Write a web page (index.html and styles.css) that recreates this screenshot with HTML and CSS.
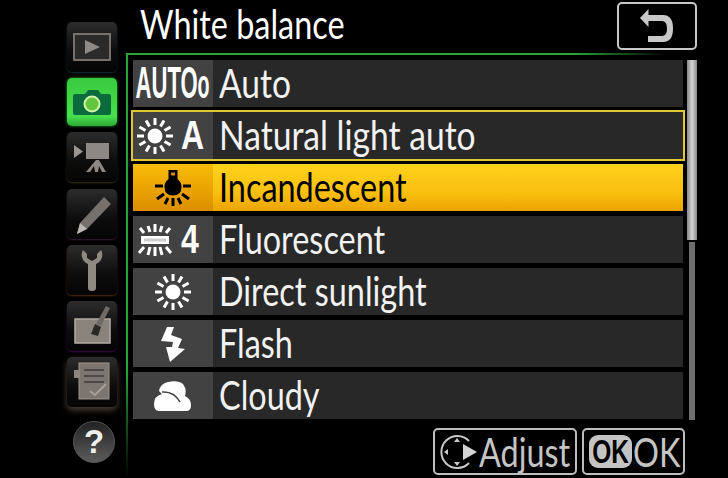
FILE: index.html
```html
<!DOCTYPE html>
<html lang="en">
<head>
    <meta charset="UTF-8">
    <title>White balance</title>
    <link rel="stylesheet" href="styles.css">
</head>
<body>
<div class="screen">

    <!-- Left tabs -->
    <div class="tabs">
        <div class="tab tab-play">
            <svg width="50" height="50" viewBox="0 0 50 50"><rect x="7" y="12" width="36" height="26" fill="#2a2a2a" stroke="#77716c" stroke-width="2"/><path d="M18 18l15 7-15 7z" fill="#8f8a86"/></svg>
        </div>
        <div class="tab tab-photo">
            <svg width="50" height="48" viewBox="0 0 50 48"><path d="M6 18q0-2 2-2h10l3-4h10l3 4h8q2 0 2 2v17q0 2-2 2H8q-2 0-2-2z" fill="#0b6b3c"/><circle cx="25" cy="26" r="8.500" fill="#d2f5a8"/><circle cx="25" cy="26" r="6.500" fill="#5fc63e"/></svg>
        </div>
        <div class="tab tab-movie">
            <svg width="50" height="50" viewBox="0 0 50 50"><path d="M7 13l9 6.500-9 6.500z" fill="#9a9692"/><rect x="19" y="11" width="23" height="16" fill="#8d8884"/><path d="M29 28h3l7 12h-4l-3-6-1 6h-3l-1-6-4 6h-4z" fill="#8d8884"/></svg>
        </div>
        <div class="tab tab-pencil">
            <svg width="50" height="50" viewBox="0 0 50 50"><path d="M37 8l7 7-24 25-10 5 3-11z" fill="#76706a"/><path d="M13 34l7 6-10 5z" fill="#bbb6b0"/></svg>
        </div>
        <div class="tab tab-setup">
            <svg width="50" height="50" viewBox="0 0 50 50"><path d="M16 5q-2 3-1 7 1 5 6 7v24q0 3 4 3t4-3V19q5-2 6-7 1-4-1-7l-4 4v4l-5 3-5-3V9z" fill="#8f8a80"/></svg>
        </div>
        <div class="tab tab-retouch">
            <svg width="50" height="50" viewBox="0 0 50 50"><rect x="8" y="18" width="35" height="24" fill="#8a837c" stroke="#b3aca4" stroke-width="1.500"/><path d="M39 5l4 2-9 18-5-2z" fill="#6f6a66"/><path d="M28 23l6 3-3 9-7-2z" fill="#2a2725"/></svg>
        </div>
        <div class="tab tab-recent">
            <svg width="50" height="50" viewBox="0 0 50 50"><rect x="12" y="6" width="30" height="36" fill="#7d7670" stroke="#9c958e"/><rect x="7" y="13" width="6" height="8" fill="#8d867f"/><path d="M17 13h20M17 19h20M17 25h20" stroke="#3d3a38" stroke-width="1.500"/><path d="M23 34l5 4 11-11" fill="none" stroke="#a7a19b" stroke-width="2"/></svg>
        </div>
        <div class="help">?</div>
    </div>

    <div class="main">
        <!-- Title bar -->
        <div class="title-bar">
            <h1><span class="squeeze">White balance</span></h1>
            <div class="back-btn">
                <svg width="46" height="36" viewBox="0 0 46 36"><path d="M14.500 1L6 10l8.500 9v-6H28q5 0 5 7.500T28 28H14v6h15q10 0 10-13.500T29 7H14.500z" fill="#c8c8c8"/></svg>
            </div>
        </div>

        <div class="content">
            <div class="frame">
                <div class="list">
                    <div class="row"><div class="row-icon"><span class="auto-mark">AUTO<small>o</small></span></div><div class="row-text"><span class="squeeze squeeze-wide">Auto</span></div></div>
                    <div class="row row-focus"><div class="row-icon icon-pair">
                        <svg width="36" height="36" viewBox="0 0 36 36"><use href="#sun"/></svg><span class="icon-letter">A</span>
                    </div><div class="row-text"><span class="squeeze squeeze-wide">Natural light auto</span></div></div>
                    <div class="row row-active"><div class="row-icon">
                        <svg width="36" height="36" viewBox="0 0 36 36"><path d="M13.500 0h9v9q4 3 4 8 0 8.500-8.500 8.500T9.500 17q0-5 4-8z" fill="#000"/><rect x="16" y="2.500" width="4" height="3" fill="#d88a00"/><g stroke="#000" stroke-width="3"><path d="M0 16h8M28 16h8M2 29l7-5M34 29l-7-5M18 28v8M10 34l3-6M26 34l-3-6"/></g></svg>
                    </div><div class="row-text"><span class="squeeze">Incandescent</span></div></div>
                    <div class="row"><div class="row-icon icon-pair">
                        <svg width="36" height="36" viewBox="0 0 36 36"><rect x="4" y="14" width="28" height="8" fill="#fff"/><rect x="7" y="16.500" width="22" height="3" fill="#cfcfcf"/><g stroke="#fff" stroke-width="3"><path d="M7 11L3 6M13 10l-2-6M18 10V2M23 10l2-6M29 11l4-5M7 25l-5 6M13 25l-2 8M18 25v9M23 25l2 8M29 25l5 6"/></g></svg><span class="icon-letter">4</span>
                    </div><div class="row-text"><span class="squeeze">Fluorescent</span></div></div>
                    <div class="row"><div class="row-icon">
                        <svg width="36" height="36" viewBox="0 0 36 36"><use href="#sun"/></svg>
                    </div><div class="row-text"><span class="squeeze">Direct sunlight</span></div></div>
                    <div class="row"><div class="row-icon">
                        <svg width="24" height="36" viewBox="0 0 24 36"><path d="M6 1h7l-3 8 11 4-4 9 7 1L9 36 5 21h6l1-5-12-1z" fill="#fff"/></svg>
                    </div><div class="row-text"><span class="squeeze">Flash</span></div></div>
                    <div class="row"><div class="row-icon">
                        <svg width="38" height="30" viewBox="0 0 38 30"><path d="M5 30q-5 0-5-7 0-8 8-10l-3-3q1-7 9-9 10-2 15 2 4 5 2 12 6 3 6 9 0 6-5 6z" fill="#fff"/><path d="M8 11q12-1 18 10" fill="none" stroke="#424242" stroke-width="1.500"/></svg>
                    </div><div class="row-text"><span class="squeeze">Cloudy</span></div></div>
                </div>
                <div class="scroll">
                    <div class="scroll-thumb"></div>
                    <div class="scroll-track"></div>
                </div>
            </div>

            <!-- Bottom hints -->
            <div class="hints">
                <div class="hint hint-adjust">
                    <svg width="40" height="40" viewBox="0 0 40 40"><path d="M30 9A16 16 0 1 0 30 31" fill="none" stroke="#c8c8c8" stroke-width="2"/><path d="M24 12l14 8-14 8z" fill="#d4d4d4"/><path d="M18 6l-3 4h6zM18 34l-3-4h6zM5 20l4-3v6z" fill="#c8c8c8"/></svg>
                    <span class="squeeze">Adjust</span>
                </div>
                <div class="hint hint-ok"><span class="ok-mark"><span class="ok-letters">OK</span></span><span class="squeeze">OK</span></div>
            </div>
        </div>
    </div>
</div>

<svg width="0" height="0" class="defs">
    <symbol id="sun" viewBox="0 0 36 36">
        <circle cx="18" cy="18" r="7.500" fill="#fff"/>
        <g stroke="#fff" stroke-width="3"><path d="M18 0v7M18 29v7M0 18h7M29 18h7M2.400 9l6.100 3.500M33.600 9l-6.100 3.500M2.400 27l6.100-3.500M33.600 27l-6.100-3.500M9 2.400l3.500 6.100M27 2.400l-3.500 6.100M9 33.600l3.500-6.100M27 33.600l-3.500-6.100"/></g>
    </symbol>
</svg>
</body>
</html>
```
FILE: styles.css
```css
/* General */
html, body {
    margin: 0;
    padding: 0;
    background: #000;
}

.screen {
    width: 728px;
    height: 478px;
    display: flex;
    overflow: hidden;
    background: #000;
    color: #fff;
    font-family: "Lato", "Liberation Sans", sans-serif;
}

.defs {
    position: absolute;
}

/* The camera font is condensed, so the text gets squeezed sideways */
.squeeze {
    display: inline-block;
    white-space: nowrap;
    transform: scaleX(0.81);
    transform-origin: left center;
}

.squeeze-wide {
    transform: scaleX(0.84);
}

/* Left tabs */
.tabs {
    width: 126px;
    padding: 22px 0 0 67px;
    box-sizing: border-box;
    display: flex;
    flex-direction: column;
    gap: 6.200px;
    flex-shrink: 0;
}

.tab {
    width: 50px;
    height: 50px;
    border-radius: 5px;
    background: linear-gradient(#2c2c2c, #0c0c0c 60%, #050505);
    box-shadow: 0 0 0 1px #222;
    display: flex;
}

.tab-photo {
    height: 48px;
    background: linear-gradient(#39c93f, #45e04c 80%, #2fa834);
    box-shadow: 0 0 3px #2aa82f;
}

.tab-play { box-shadow: 0 1px 2px #10303a; }
.tab-movie { box-shadow: 0 1px 2px #3a3418; }
.tab-pencil { box-shadow: 0 1px 2px #3a1c38; }
.tab-setup { box-shadow: 0 1px 2px #54300c; }
.tab-retouch { box-shadow: 0 1px 2px #3c0c50; }
.tab-recent { box-shadow: 0 3px 6px #4a4038; }

.help {
    width: 40px;
    height: 40px;
    margin: 8px 0 0 6px;
    border-radius: 50%;
    background: linear-gradient(#222, #5c5c5c);
    border: 1px solid #555;
    font: bold 33px/40px "Liberation Sans", sans-serif;
    text-align: center;
    color: #eee;
}

/* Main */
.main {
    flex: 1;
    display: flex;
    flex-direction: column;
    min-width: 0;
}

.title-bar {
    height: 53px;
    display: flex;
    justify-content: space-between;
    padding: 1px 31px 0 14px;
    box-sizing: border-box;
}

.title-bar h1 {
    margin: 0;
    font-size: 40px;
    font-weight: normal;
    line-height: 46px;
}

.back-btn {
    width: 80px;
    height: 48px;
    margin-top: 1px;
    box-sizing: border-box;
    border: 2px solid #c8c8c8;
    border-radius: 5px;
    display: flex;
    align-items: center;
    justify-content: center;
}

/* Green frame lines, both fade out */
.content {
    height: 425px;
    width: 600px;
    background:
        linear-gradient(90deg, #2aa336 75%, #000 90%) top left / 100% 2px no-repeat,
        linear-gradient(180deg, #2aa336 75%, #000) top left / 2px 100% no-repeat;
}

.frame {
    height: 367px;
    padding: 7px 0 0 7px;
    display: flex;
    box-sizing: border-box;
}

/* List */
.list {
    width: 550px;
    display: flex;
    flex-direction: column;
    gap: 5px;
    flex-shrink: 0;
}

.row {
    height: 47px;
    display: flex;
    background: #282828;
    flex-shrink: 0;
}

.row-icon {
    width: 80px;
    background: #424242;
    display: flex;
    align-items: center;
    justify-content: center;
}

.icon-pair {
    justify-content: flex-start;
    padding-left: 4px;
    box-sizing: border-box;
}

.row-text {
    flex: 1;
    padding-left: 6px;
    font-size: 40px;
    line-height: 47px;
    color: #f2f2f2;
}

.row-focus {
    outline: 2px solid #e0c832;
}

.row-active {
    background: linear-gradient(#ffd21a, #f9c010 60%, #eca400);
}

.row-active .row-icon {
    background: linear-gradient(#f8bc08, #dc8e00);
}

.row-active .row-text {
    color: #000;
}

.auto-mark {
    display: inline-block;
    white-space: nowrap;
    font-family: "Liberation Sans", sans-serif;
    font-weight: bold;
    font-size: 45px;
    line-height: 47px;
    transform: scaleX(0.49);
}

.auto-mark small {
    font-size: 40px;
}

.icon-letter {
    display: inline-block;
    margin-left: 8px;
    font-family: "Liberation Sans", sans-serif;
    font-weight: bold;
    font-size: 40px;
    line-height: 47px;
    transform: scaleX(0.8);
    transform-origin: left center;
}

/* Scrollbar */
.scroll {
    width: 10px;
    margin-left: 4px;
    height: 360px;
    display: flex;
    flex-direction: column;
    align-items: center;
    gap: 2px;
}

.scroll-thumb {
    width: 10px;
    height: 180px;
    background: linear-gradient(90deg, #888, #d4d4d4 50%, #8a8a8a);
}

.scroll-track {
    width: 6px;
    flex: 1;
    background: #6e6e6e;
}

/* Bottom hints */
.hints {
    display: flex;
    justify-content: flex-end;
    gap: 5px;
    padding: 8px 0 0 0;
    width: 559px;
}

.hint {
    height: 47px;
    box-sizing: border-box;
    border: 2px solid #bdbdbd;
    border-radius: 5px;
    display: flex;
    align-items: center;
    font-size: 40px;
    color: #c4c4c4;
}

.hint svg {
    flex-shrink: 0;
}

.hint-adjust {
    width: 144px;
    padding-left: 4px;
}

.hint-ok {
    width: 103px;
    padding-left: 5px;
}

.ok-mark {
    width: 43px;
    height: 33px;
    flex-shrink: 0;
    background: #c4c4c4;
    border-radius: 9px;
    display: flex;
    justify-content: center;
    align-items: center;
    margin-right: 1px;
}

.ok-letters {
    color: #000;
    font-family: "Liberation Sans", sans-serif;
    font-weight: bold;
    font-size: 34px;
    transform: scaleX(0.72);
}
```
